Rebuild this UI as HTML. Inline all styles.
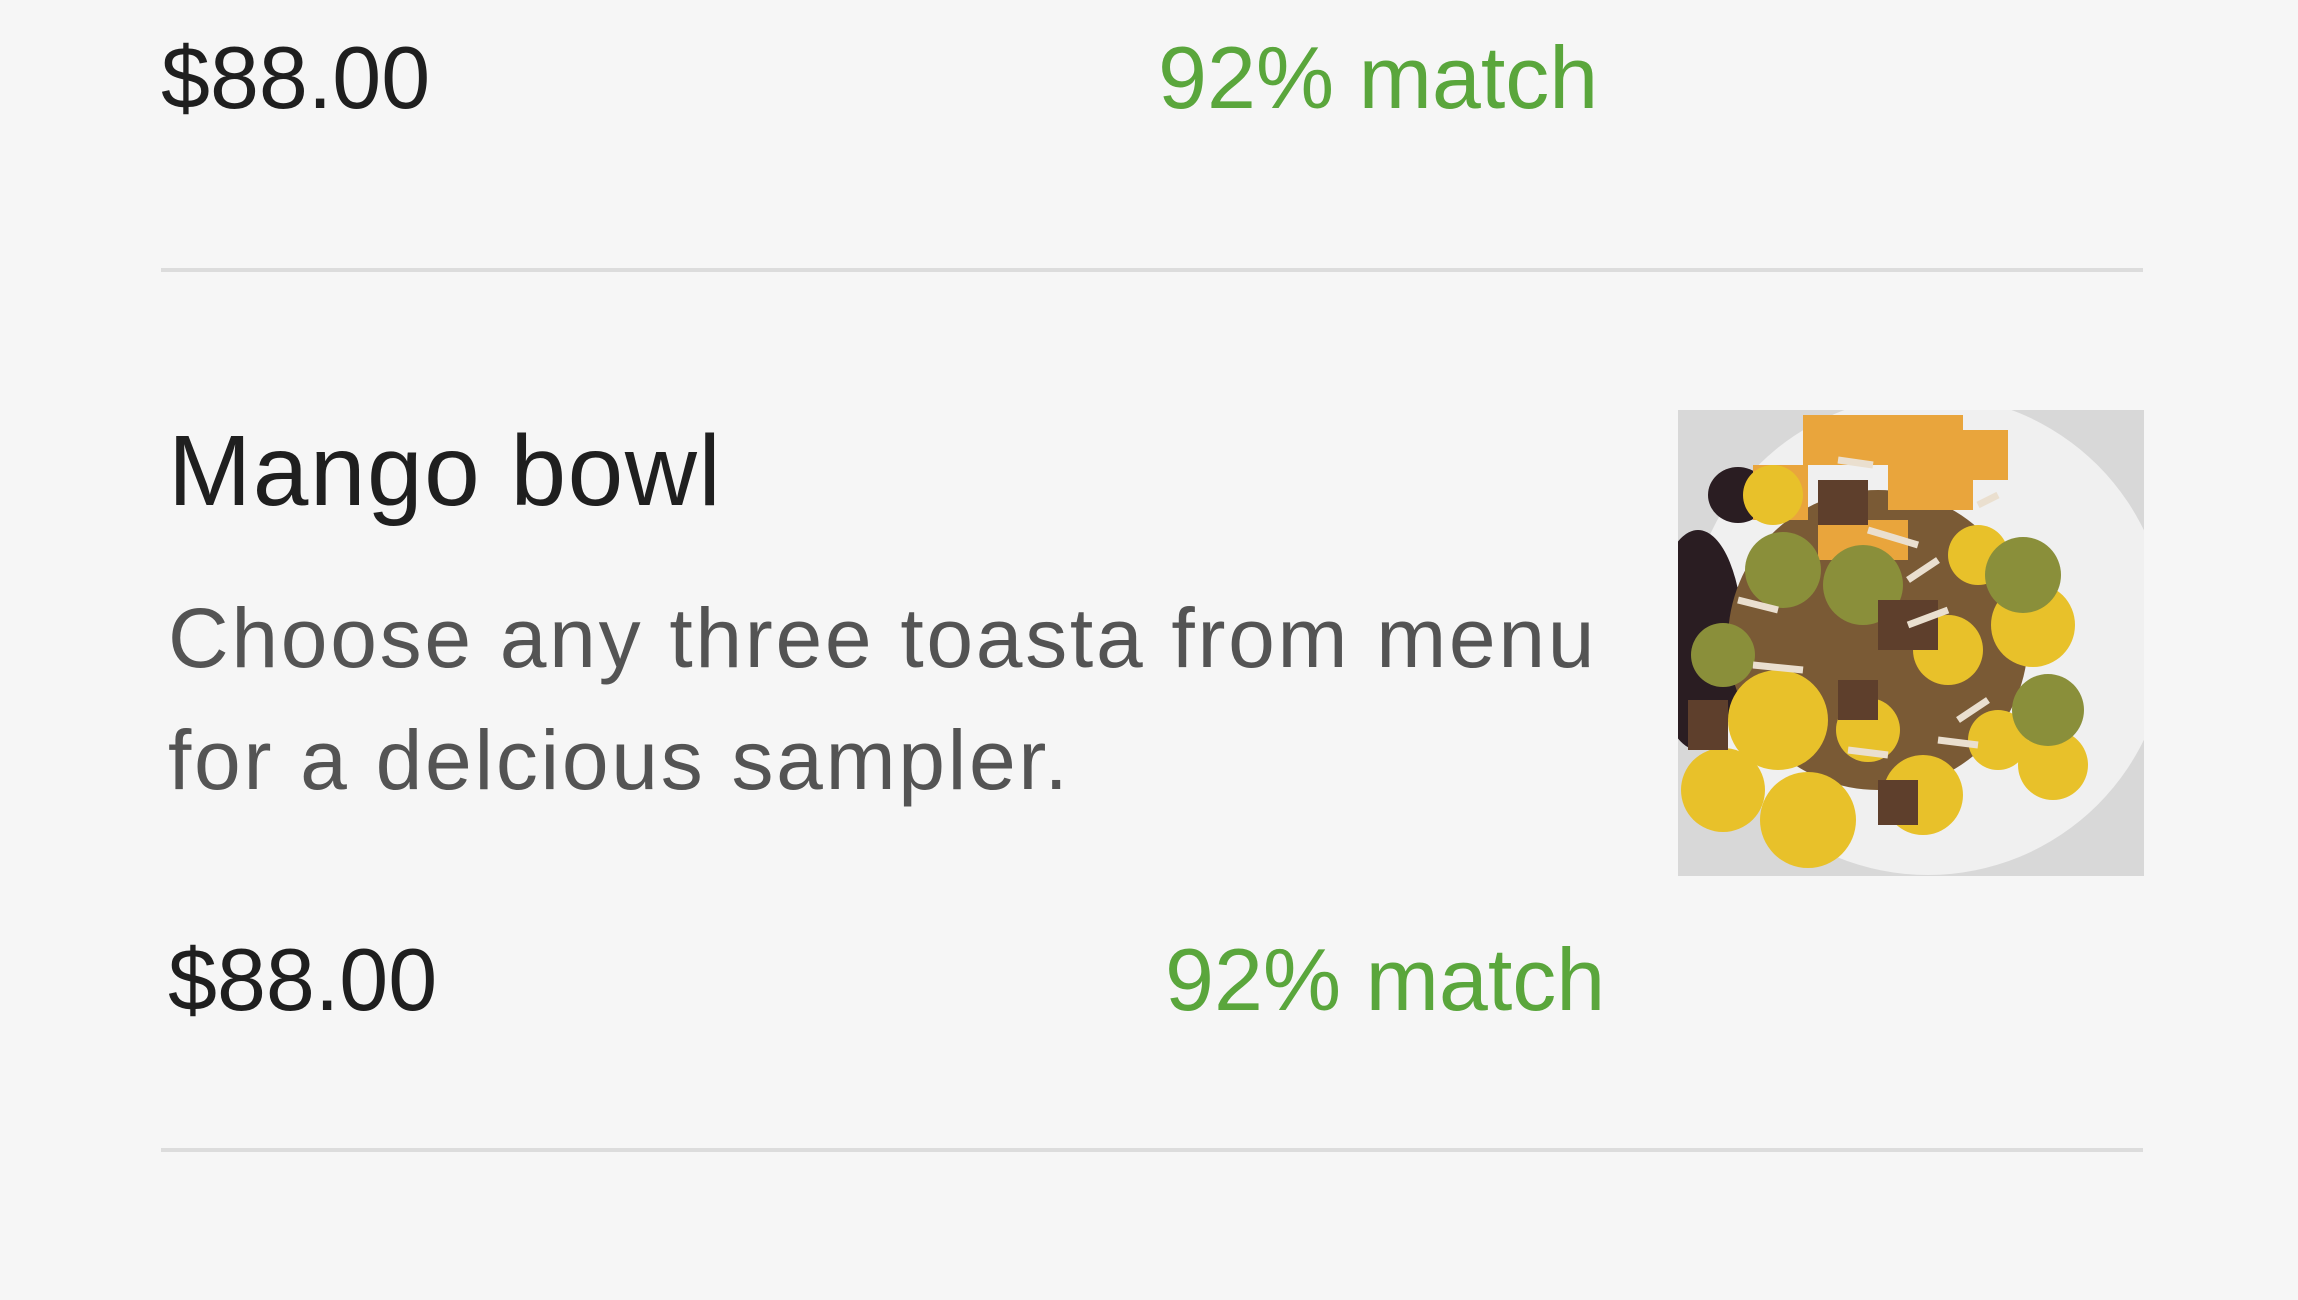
<!DOCTYPE html>
<html><head><meta charset="utf-8"><style>
html,body{margin:0;padding:0;width:2298px;height:1300px;background:#f6f6f6;overflow:hidden;font-family:"Liberation Sans",sans-serif}
.t{position:absolute;white-space:nowrap;line-height:1}
.p{font-size:88px;color:#1f1f1f}
.m{font-size:88px;color:#5aa63c}
.h{font-size:100px;color:#1f1f1f;letter-spacing:1.5px}
.d{font-size:84px;color:#545454;letter-spacing:2.7px}
.hr{position:absolute;left:161px;width:1982px;height:4px;background:#dcdcdc}
</style></head><body>
<div class="t p" style="left:161px;top:34px">$88.00</div>
<div class="t m" style="left:1158px;top:34px">92% match</div>
<div class="hr" style="top:268px"></div>
<div class="t h" style="left:168px;top:421px">Mango bowl</div>
<div class="t d" style="left:168px;top:596px">Choose any three toasta from menu</div>
<div class="t d" style="left:168px;top:718px">for a delcious sampler.</div>
<div class="t p" style="left:168px;top:936px">$88.00</div>
<div class="t m" style="left:1165px;top:936px">92% match</div>
<div class="hr" style="top:1148px"></div>
<svg style="position:absolute;left:1678px;top:410px" width="466" height="466" viewBox="0 0 466 466">
<rect width="466" height="466" fill="#d8d8d8"/>
<circle cx="250" cy="225" r="240" fill="#f0f0f0"/>
<ellipse cx="20" cy="230" rx="45" ry="110" fill="#2a1d22"/>
<ellipse cx="60" cy="85" rx="30" ry="28" fill="#2a1d22"/>
<g fill="#7a5a35"><circle cx="200" cy="230" r="150"/></g>
<g fill="#e9a53c"><rect x="125" y="5" width="65" height="50"/><rect x="190" y="5" width="95" height="50"/><rect x="210" y="55" width="85" height="45"/><rect x="285" y="20" width="45" height="50"/><rect x="75" y="55" width="55" height="55"/><rect x="140" y="110" width="90" height="40"/></g>
<g fill="#e8c12a"><circle cx="100" cy="310" r="50"/><circle cx="45" cy="380" r="42"/><circle cx="130" cy="410" r="48"/><circle cx="355" cy="215" r="42"/><circle cx="270" cy="240" r="35"/><circle cx="375" cy="355" r="35"/><circle cx="245" cy="385" r="40"/><circle cx="320" cy="330" r="30"/><circle cx="190" cy="320" r="32"/><circle cx="95" cy="85" r="30"/><circle cx="300" cy="145" r="30"/></g>
<g fill="#8a8f3a"><circle cx="105" cy="160" r="38"/><circle cx="185" cy="175" r="40"/><circle cx="45" cy="245" r="32"/><circle cx="345" cy="165" r="38"/><circle cx="370" cy="300" r="36"/></g>
<g fill="#5e3f2c"><rect x="140" y="70" width="50" height="45"/><rect x="200" y="190" width="60" height="50"/><rect x="10" y="290" width="40" height="50"/><rect x="160" y="270" width="40" height="40"/><rect x="200" y="370" width="40" height="45"/></g>
<g stroke="#eadfcf" stroke-width="7"><line x1="160" y1="50" x2="195" y2="55"/><line x1="190" y1="120" x2="240" y2="135"/><line x1="230" y1="170" x2="260" y2="150"/><line x1="60" y1="190" x2="100" y2="200"/><line x1="75" y1="255" x2="125" y2="260"/><line x1="230" y1="215" x2="270" y2="200"/><line x1="300" y1="95" x2="320" y2="85"/><line x1="280" y1="310" x2="310" y2="290"/><line x1="170" y1="340" x2="210" y2="345"/><line x1="260" y1="330" x2="300" y2="335"/></g>
</svg>
</body></html>
